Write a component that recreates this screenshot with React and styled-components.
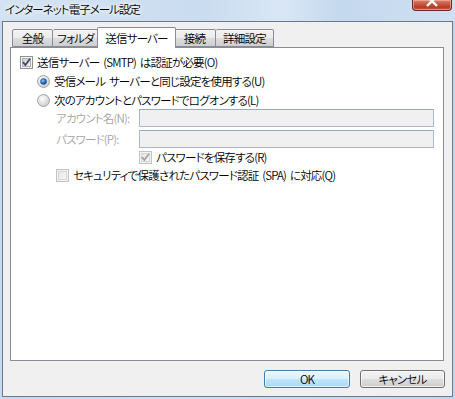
import React from 'react'
import styled, { createGlobalStyle } from 'styled-components'

const GlobalStyle = createGlobalStyle`
  html, body {
    margin: 0;
    padding: 0;
    background: #c5d8ec;
  }
  body {
    font-family: "Noto Sans CJK JP", "Liberation Sans", sans-serif;
    font-size: 11.5px;
    font-weight: 350;
    letter-spacing: -0.8px;
    word-spacing: 2px;
    font-feature-settings: "palt";
    color: #000;
  }
`

const tabs = ['全般', 'フォルダ', '送信サーバー', '接続', '詳細設定']
const tabWidths = [41, 46, 79, 42, 58]
const ACTIVE = 2

const CheckBox = ({ checked, disabled }) => {
  const edge = disabled ? '#c2c2c2' : '#8e8f8f'
  const mark = disabled ? '#a6a6a6' : '#3b4a6e'
  const id = disabled ? 'cbd' : 'cbe'
  return (
    <svg width="13" height="13" viewBox="0 0 13 13">
      <defs>
        <linearGradient id={id} x1="0" y1="0" x2="1" y2="1">
          <stop offset="0" stopColor={disabled ? '#e6e6e6' : '#cbcbcb'} />
          <stop offset="1" stopColor={disabled ? '#f8f8f8' : '#f6f6f6'} />
        </linearGradient>
      </defs>
      <rect x="0.5" y="0.5" width="12" height="12" fill="#f4f4f4" stroke={edge} />
      <rect x="2.5" y="2.5" width="8" height="8" fill={`url(#${id})`} stroke={disabled ? '#d6d6d6' : '#aeb0b3'} />
      {checked && (
        <path d="M3 6.2 L5.4 9 L10 2.8" fill="none" stroke={mark} strokeWidth="1.8" />
      )}
    </svg>
  )
}

const Radio = ({ checked }) => (
  <svg width="13" height="13" viewBox="0 0 13 13">
    <defs>
      <radialGradient id="rg" cx="0.4" cy="0.35" r="0.7">
        <stop offset="0" stopColor="#ffffff" />
        <stop offset="1" stopColor="#c9c9c9" />
      </radialGradient>
      <radialGradient id="dot" cx="0.4" cy="0.35" r="0.7">
        <stop offset="0" stopColor="#8fd0ff" />
        <stop offset="0.5" stopColor="#2b7ad1" />
        <stop offset="1" stopColor="#123a7a" />
      </radialGradient>
    </defs>
    <circle cx="6.5" cy="6.5" r="6" fill="url(#rg)" stroke="#a2a2a2" />
    {checked && <circle cx="6.5" cy="6.5" r="3" fill="url(#dot)" stroke="#1f4e8c" strokeWidth="0.6" />}
  </svg>
)

export default function App() {
  return (
    <>
      <GlobalStyle />
      <Window>
        <TitleBar>
          <Title>インターネット電子メール設定</Title>
          <CloseButton>
            <svg width="14" height="8" viewBox="0 0 14 8">
              <path d="M2 -4 L12 6 M12 -4 L2 6" stroke="#fff" strokeWidth="2.4" />
            </svg>
          </CloseButton>
        </TitleBar>
        <Client>
          <TabStrip>
            {tabs.map((t, i) => (
              <Tab key={t} $active={i === ACTIVE} $first={i === 0} $w={tabWidths[i]}>
                {t}
              </Tab>
            ))}
          </TabStrip>
          <Panel>
            <Row $indent={9} $h={19}>
              <CheckBox checked />
              <Label>送信サーバー (SMTP) は認証が必要(O)</Label>
            </Row>
            <Row $indent={26} $h={19}>
              <Radio checked />
              <Label>受信メール サーバーと同じ設定を使用する(U)</Label>
            </Row>
            <Row $indent={26} $h={18}>
              <Radio />
              <Label>次のアカウントとパスワードでログオンする(L)</Label>
            </Row>
            <FieldGrid>
              <FieldLabel>アカウント名(N):</FieldLabel>
              <TextBox />
              <FieldLabel>パスワード(P):</FieldLabel>
              <TextBox />
            </FieldGrid>
            <Row $indent={128} $h={18}>
              <CheckBox checked disabled />
              <Label>パスワードを保存する(R)</Label>
            </Row>
            <Row $indent={45} $h={19}>
              <CheckBox disabled />
              <Label>セキュリティで保護されたパスワード認証 (SPA) に対応(Q)</Label>
            </Row>
          </Panel>
          <ButtonRow>
            <Button $default>OK</Button>
            <Button>キャンセル</Button>
          </ButtonRow>
        </Client>
      </Window>
    </>
  )
}

const Window = styled.div`
  width: 455px;
  height: 399px;
  box-sizing: border-box;
  display: flex;
  flex-direction: column;
  padding: 0 2px 2px 2px;
  background: linear-gradient(to right, #c6d9ee, #cfe0f2 40%, #c2d6ec 100%);
`

const TitleBar = styled.div`
  height: 21px;
  flex: none;
  display: flex;
  justify-content: space-between;
  align-items: flex-start;
  margin: 0 -2px;
  padding: 0 2px 0 5px;
  background: linear-gradient(to right, #d4e3f3 0%, #cadcf0 45%, #d9e7f5 62%, #c4d8ee 75%, #d0e0f2 100%);
`

const Title = styled.div`
  margin-top: 2px;
  line-height: 15px;
  letter-spacing: -1px;
  text-shadow: 0 0 4px #fff, 0 0 6px #fff;
`

const CloseButton = styled.div`
  width: 40px;
  height: 11px;
  box-sizing: border-box;
  margin-right: 1px;
  display: flex;
  justify-content: center;
  overflow: hidden;
  border: 1px solid #6b2a25;
  border-top: none;
  border-radius: 0 0 4px 4px;
  background: linear-gradient(to bottom, #d7836f 0%, #c9543c 45%, #b23a26 70%, #c75f45 100%);
  box-shadow: inset 0 0 0 1px rgba(255, 200, 190, 0.5);
`

const Client = styled.div`
  flex: 1;
  display: flex;
  flex-direction: column;
  border: 1px solid #6f7886;
  background: #f0f0f0;
  padding: 6px 8px 0 7px;
`

const TabStrip = styled.div`
  height: 20px;
  display: flex;
  align-items: flex-end;
  padding-left: 2px;
  margin-bottom: -1px;
  position: relative;
  z-index: 1;
`

const Tab = styled.div`
  box-sizing: border-box;
  width: ${(p) => p.$w}px;
  height: ${(p) => (p.$active ? 21 : 18)}px;
  margin: ${(p) => (p.$active ? '0 -2px' : '0 0 1px 0')};
  padding-top: ${(p) => (p.$active ? 3 : 1)}px;
  border: 1px solid #898c95;
  border-bottom: ${(p) => (p.$active ? 'none' : '1px solid #898c95')};
  border-left-width: ${(p) => (p.$active || p.$first ? 1 : 0)}px;
  border-radius: 2px 2px 0 0;
  position: relative;
  z-index: ${(p) => (p.$active ? 2 : 1)};
  background: ${(p) =>
    p.$active ? '#ffffff' : 'linear-gradient(to bottom, #f3f3f3 0%, #ebebeb 50%, #dddddd 52%, #cfcfcf 100%)'};
  text-align: center;
  white-space: nowrap;
  line-height: 15px;
`

const Panel = styled.div`
  height: 314px;
  box-sizing: border-box;
  border: 1px solid #898c95;
  background: #fff;
  padding-top: 5px;
  display: flex;
  flex-direction: column;
`

const Row = styled.div`
  height: ${(p) => p.$h}px;
  display: flex;
  align-items: center;
  gap: 4px;
  padding-left: ${(p) => p.$indent}px;
`

const Label = styled.span`
  white-space: nowrap;
  line-height: 15px;
`

const FieldGrid = styled.div`
  display: grid;
  grid-template-columns: 83px 295px;
  grid-auto-rows: 18px;
  row-gap: 3px;
  padding-left: 45px;
  align-items: center;
`

const FieldLabel = styled.span`
  color: #a3a3a3;
  white-space: nowrap;
`

const TextBox = styled.div`
  height: 18px;
  box-sizing: border-box;
  border: 1px solid #a9b9d0;
  border-top-color: #98a9c2;
  background: #f0f0f0;
`

const ButtonRow = styled.div`
  display: flex;
  justify-content: flex-end;
  gap: 10px;
  margin-top: 9px;
  margin-right: -1px;
`

const Button = styled.div`
  width: ${(p) => (p.$default ? 86 : 85)}px;
  height: 18px;
  box-sizing: border-box;
  display: flex;
  align-items: center;
  justify-content: center;
  border: 1px solid ${(p) => (p.$default ? '#3c7fb1' : '#707070')};
  border-radius: 3px;
  background: ${(p) =>
    p.$default
      ? 'linear-gradient(to bottom, #eaf6fd 0%, #d9f0fc 50%, #bee6fd 52%, #a7d9f5 100%)'
      : 'linear-gradient(to bottom, #f2f2f2 0%, #ebebeb 50%, #dddddd 52%, #cfcfcf 100%)'};
  box-shadow: inset 0 0 0 1px rgba(255, 255, 255, 0.65);
`
